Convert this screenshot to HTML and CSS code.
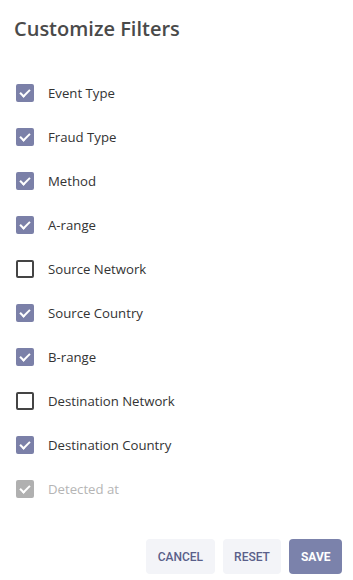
FILE: index.html
```html
<!DOCTYPE html>
<html lang="en">
<head>
  <meta charset="UTF-8" />
  <meta name="viewport" content="width=device-width, initial-scale=1.0" />
  <title>Customize Filters</title>
  <link rel="stylesheet" href="styles.css">
</head>
<body>
  <div class="dialog">
    <h1>Customize Filters</h1>

    <ul class="filters">
      <li><span class="box checked"></span>Event Type</li>
      <li><span class="box checked"></span>Fraud Type</li>
      <li><span class="box checked"></span>Method</li>
      <li><span class="box checked"></span>A-range</li>
      <li><span class="box"></span>Source Network</li>
      <li><span class="box checked"></span>Source Country</li>
      <li><span class="box checked"></span>B-range</li>
      <li><span class="box"></span>Destination Network</li>
      <li><span class="box checked"></span>Destination Country</li>
      <li class="disabled"><span class="box checked"></span>Detected at</li>
    </ul>

    <div class="actions">
      <button class="btn">CANCEL</button>
      <button class="btn">RESET</button>
      <button class="btn primary">SAVE</button>
    </div>
  </div>
</body>
</html>
```

FILE: styles.css
```css
body {
  margin: 0;
  font-family: 'Open Sans', sans-serif;
  background: #fff;
  color: #333;
}
.dialog {
  padding: 15px 11px 5px 14px;
}
h1 {
  margin: 0;
  font-size: 20px;
  font-weight: 600;
  color: #4a4a4a;
  line-height: 27px;
}
.filters {
  list-style: none;
  margin: 29px 0 0 0;
  padding: 0;
}
.filters li {
  display: flex;
  align-items: center;
  height: 44px;
  font-size: 13.2px;
  color: #333;
}
.box {
  box-sizing: border-box;
  width: 18px;
  height: 18px;
  margin: 0 14px 0 2px;
  border: 2px solid #444;
  border-radius: 2px;
  position: relative;
}
.box.checked {
  background: #7b80a8;
  border-color: #7b80a8;
}
.box.checked::after {
  content: "";
  position: absolute;
  left: 4px;
  top: 1px;
  width: 4px;
  height: 8px;
  border: solid #fff;
  border-width: 0 2px 2px 0;
  transform: rotate(45deg);
}
.disabled {
  color: #b5b5b5 !important;
}
.disabled .box.checked {
  background: #b0b0b0;
  border-color: #b0b0b0;
}
.actions {
  display: flex;
  justify-content: flex-end;
  gap: 8px;
  margin-top: 28px;
}
.btn {
  font-family: 'Roboto', sans-serif;
  font-size: 12px;
  font-weight: 500;
  color: #5a5f8a;
  background: #f3f4f8;
  border: none;
  border-radius: 4px;
  height: 35px;
  padding: 0 11.5px;
  cursor: pointer;
}
.btn.primary {
  background: #7b82ab;
  color: #fff;
  font-weight: 700;
  padding: 0 11.5px;
}
```
